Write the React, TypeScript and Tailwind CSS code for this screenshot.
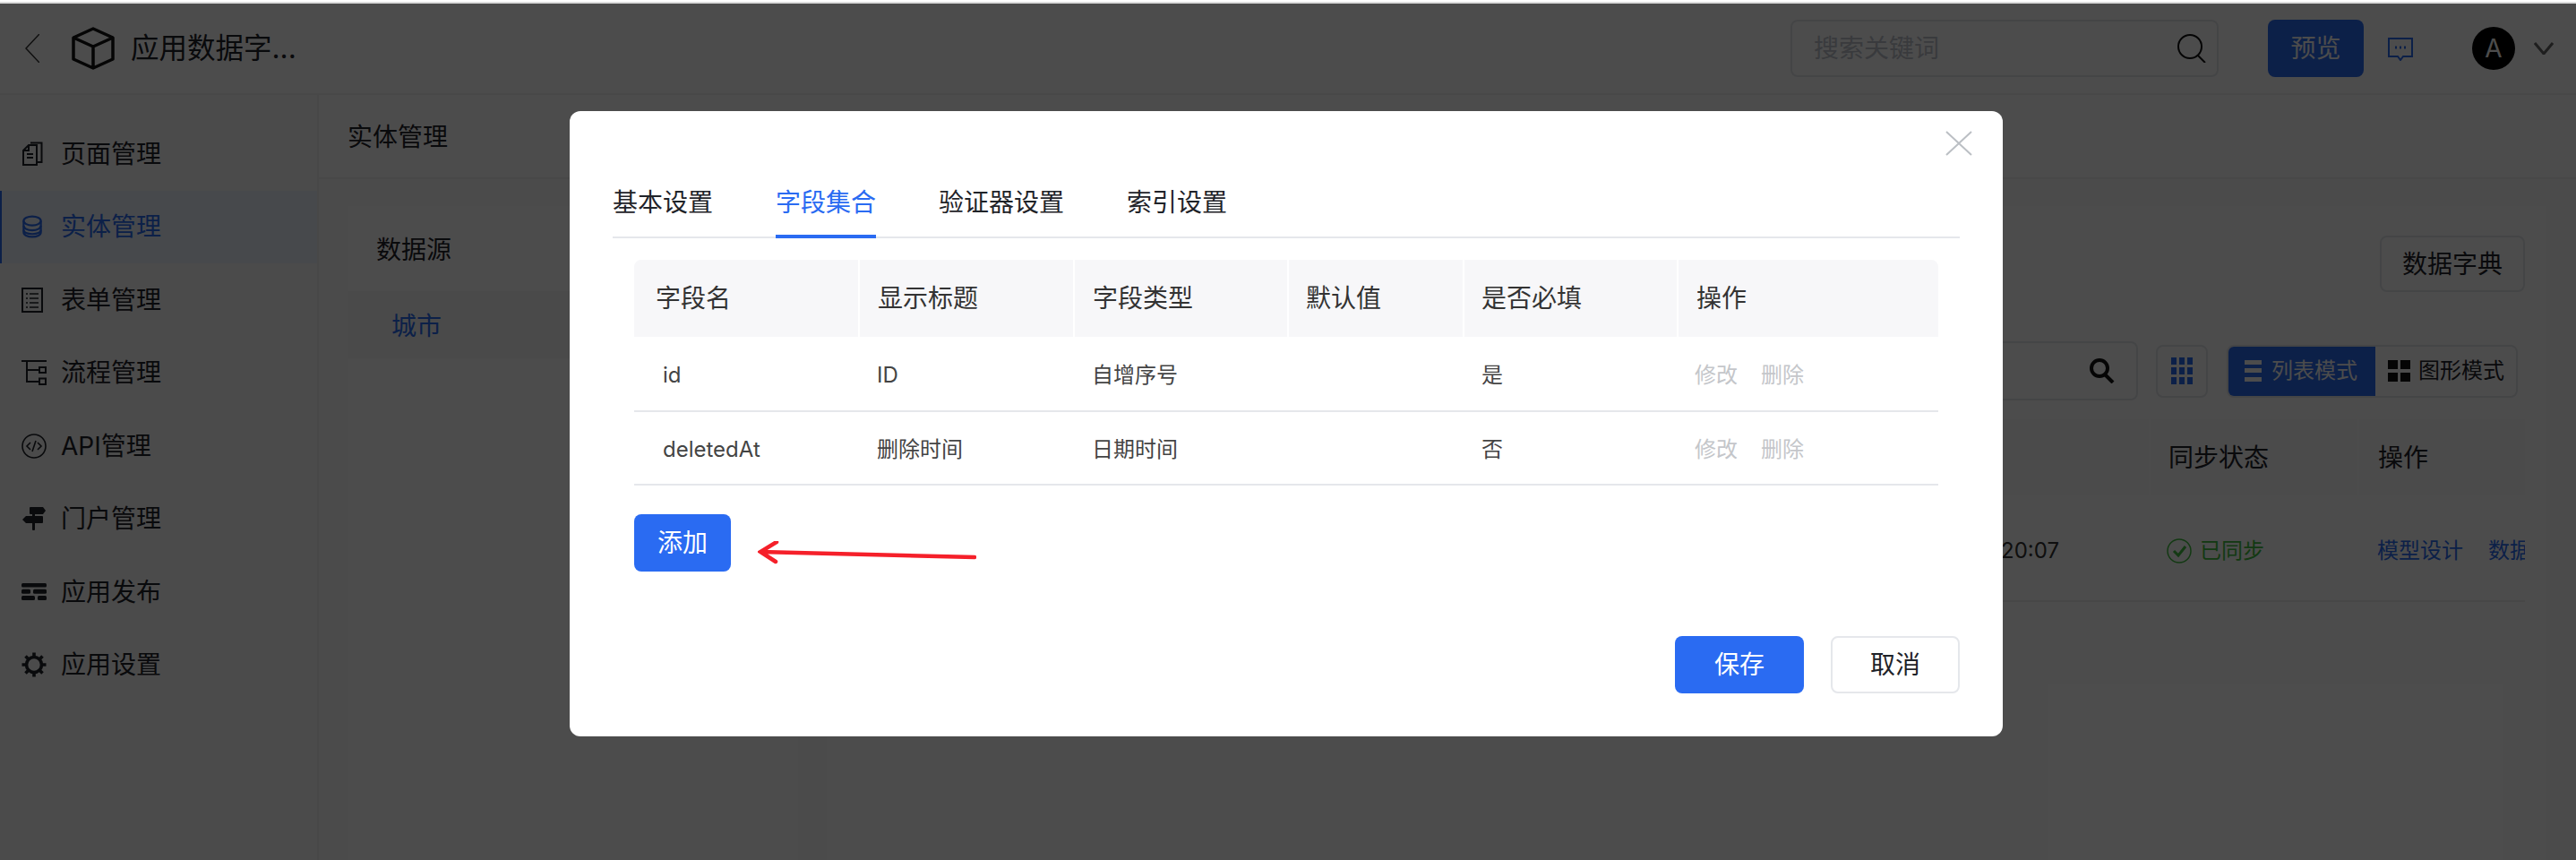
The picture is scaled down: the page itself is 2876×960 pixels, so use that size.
import type { ReactNode } from 'react';

const navItems: { label: string; icon: ReactNode; active?: boolean }[] = [
  {
    label: '页面管理',
    icon: (
      <svg viewBox="0 0 24 28" className="w-6 h-7" fill="none" stroke="currentColor" strokeWidth="2">
        <path d="M2 10 L8 4 H17 V26 H2 Z M8 4 V10 H2" />
        <path d="M10 1.500 H22.500 V23 H17" />
        <path d="M6 14 H13 M6 18 H13" />
      </svg>
    ),
  },
  {
    label: '实体管理',
    active: true,
    icon: (
      <svg viewBox="0 0 24 28" className="ml-[1px] w-[22px] h-[26px]" fill="none" stroke="currentColor" strokeWidth="2.400">
        <ellipse cx="12" cy="7" rx="10.500" ry="5.500" />
        <path d="M1.500 7 V21 C1.500 24 6 26.500 12 26.500 C18 26.500 22.500 24 22.500 21 V7" />
        <path d="M1.500 13 C1.500 16 6 18.500 12 18.500 C18 18.500 22.500 16 22.500 13" />
        <path d="M1.500 18 C1.500 21 6 23 12 23 C18 23 22.500 21 22.500 18" />
      </svg>
    ),
  },
  {
    label: '表单管理',
    icon: (
      <svg viewBox="0 0 24 28" className="w-6 h-7" fill="none" stroke="currentColor" strokeWidth="2">
        <rect x="1" y="1" width="22" height="26" />
        <path d="M5 7 H7 M9 7 H19 M5 12 H7 M9 12 H19 M5 17 H7 M9 17 H19 M5 22 H7 M9 22 H19" strokeWidth="1.600" />
      </svg>
    ),
  },
  {
    label: '流程管理',
    icon: (
      <svg viewBox="0 0 28 28" className="w-7 h-7" fill="none" stroke="currentColor" strokeWidth="2">
        <path d="M0 1 H28 M6 1 V24 H20 M6 11 H20" />
        <rect x="20" y="8" width="7" height="6" />
        <rect x="20" y="20.500" width="7" height="6.500" />
      </svg>
    ),
  },
  {
    label: 'API管理',
    icon: (
      <svg viewBox="0 0 28 28" className="w-7 h-7" fill="none" stroke="currentColor" strokeWidth="1.600">
        <circle cx="14" cy="14" r="13" />
        <path d="M10 10 L6 14 L10 18 M18 10 L22 14 L18 18 M16 8 L12 20" />
      </svg>
    ),
  },
  {
    label: '门户管理',
    icon: (
      <svg viewBox="0 0 26 26" className="ml-[1px] w-[26px] h-[26px]" fill="currentColor">
        <path d="M9 0 H23 L26 4 L23 8 H9 A1 1 0 0 1 8 7 V1 A1 1 0 0 1 9 0 Z" />
        <path d="M4 10 H22 A1 1 0 0 1 23 11 V17 A1 1 0 0 1 22 18 H4 L0 14 Z" />
        <rect x="11" y="7" width="3" height="19" rx="1" />
      </svg>
    ),
  },
  {
    label: '应用发布',
    icon: (
      <svg viewBox="0 0 28 19" className="w-7 h-[19px]" fill="currentColor">
        <rect x="0" y="0" width="28" height="4.500" rx="1.500" />
        <rect x="0" y="6.800" width="10" height="5" rx="1.500" />
        <rect x="13" y="6.800" width="15" height="5" rx="1.500" />
        <rect x="0" y="14" width="15" height="5" rx="1.500" />
        <rect x="18" y="14" width="10" height="5" rx="1.500" />
      </svg>
    ),
  },
  {
    label: '应用设置',
    icon: (
      <svg viewBox="0 0 28 28" className="w-7 h-7" fill="none" stroke="currentColor">
        <circle cx="14" cy="14" r="8.500" strokeWidth="3.600" />
        <path d="M14 0.500 V5 M14 23 V27.500 M0.500 14 H5 M23 14 H27.500 M4.500 4.500 L7.500 7.500 M20.500 20.500 L23.500 23.500 M4.500 23.500 L7.500 20.500 M20.500 7.500 L23.500 4.500" strokeWidth="3.600" />
      </svg>
    ),
  },
];

const fields = [
  { name: 'id', title: 'ID', type: '自增序号', required: '是', height: 'h-[84px]' },
  { name: 'deletedAt', title: '删除时间', type: '日期时间', required: '否', height: 'h-[82px]' },
];

export default function App() {
  return (
    <div className="relative h-[960px] w-[2876px] overflow-hidden bg-white text-[#1f2329] font-['Inter','Noto_Sans_CJK_SC',sans-serif]">
      <div className="h-[2px] bg-white" />
      <div className="h-[2px] bg-[#dcdcdc]" />

      {/* Barra superior */}
      <header className="flex h-[100px] items-center bg-white">
        <svg viewBox="0 0 16 32" className="ml-[28px] h-[32px] w-[16px]" fill="none" stroke="#333" strokeWidth="1.500">
          <path d="M16 0 L1 16 L16 32" />
        </svg>
        <svg viewBox="0 0 48 48" className="ml-[36px] h-[48px] w-[48px]" fill="none" stroke="#111" strokeWidth="3.500" strokeLinejoin="round">
          <path d="M24 2 L46 12 V36 L24 46 L2 36 V12 Z M2 12 L24 22 L46 12 M24 22 V46" />
        </svg>
        <span className="ml-[18px] text-[31.500px] leading-[44px]">应用数据字...</span>

        <div className="ml-auto flex h-[64px] w-[478px] items-center rounded-lg border-2 border-[#e5e7eb] pl-[24px] pr-[10px]">
          <span className="text-[28px] text-[#c0c4cc]">搜索关键词</span>
          <svg viewBox="0 0 36 32" className="ml-auto h-[32px] w-[36px]" fill="none" stroke="#111" strokeWidth="2">
            <circle cx="16" cy="14" r="13" />
            <path d="M25 24 L33 32" />
          </svg>
        </div>
        <button className="ml-[55px] h-[64px] w-[107px] rounded-lg bg-[#2a6bf2] text-[28px] text-white">预览</button>
        <svg viewBox="0 0 28 26" className="ml-[27px] mt-[2px] h-[26px] w-[28px]" fill="none" stroke="#2a6bf2" strokeWidth="2">
          <path d="M1 1 H27 V21 H17 L14 25 L11 21 H1 Z" />
          <path d="M8 11 H10 M13 11 H15 M18 11 H20" strokeWidth="3" />
        </svg>
        <div className="ml-[66px] flex h-[48px] w-[48px] items-center justify-center rounded-full bg-black text-[28px] text-white">A</div>
        <svg viewBox="0 0 22 14" className="ml-[21px] mr-[25px] h-[14px] w-[22px]" fill="none" stroke="#666" strokeWidth="3">
          <path d="M1 1 L11 13 L21 1" />
        </svg>
      </header>

      <div className="flex h-[856px] border-t-2 border-[#f0f0f0]">
        {/* Menu lateral */}
        <aside className="flex w-[356px] shrink-0 flex-col border-r-2 border-[#f0f0f0] bg-[#fafafa] pt-[25px]">
          {navItems.map((item) => (
            <div
              key={item.label}
              className={`flex h-[81.500px] items-center text-[28px] ${item.active ? 'border-l-2 border-[#2a6bf2] bg-[#edf4ff] pl-[22px] text-[#2a6bf2]' : 'pl-[24px]'}`}
            >
              <span className="flex w-[44px] justify-start">{item.icon}</span>
              <span>{item.label}</span>
            </div>
          ))}
        </aside>

        <main className="flex flex-1 flex-col bg-[#fafafa]">
          <div className="flex h-[94px] items-center border-b-2 border-[#f0f0f0] bg-white pl-[32px] pt-[2px] text-[28px]">实体管理</div>

          <div className="flex flex-1 gap-[32px] pl-[32px] pr-[33px] pt-[30px]">
            {/* Fuentes de datos */}
            <section className="flex w-[503px] shrink-0 flex-col bg-white">
              <div className="flex h-[95px] items-center pl-[32px] pt-[2px] text-[28px]">数据源</div>
              <div className="flex h-[75px] items-center bg-[#f8f8f8] pl-[49px] pt-[2px] text-[28px] text-[#2a6bf2]">城市</div>
            </section>

            {/* Lista de entidades */}
            <section className="flex flex-1 flex-col items-end bg-white">
              <button className="mr-[24px] mt-[33px] h-[63px] w-[162px] rounded-lg border-2 border-[#e5e7eb] text-[28px]">数据字典</button>

              <div className="mr-[32px] mt-[55px] flex h-[66px] items-center">
                <div className="flex h-[66px] w-[300px] items-center justify-end rounded-lg border-2 border-[#e5e7eb] pr-[24px]">
                  <svg viewBox="0 0 28 28" className="h-[28px] w-[28px]" fill="none" stroke="#111" strokeWidth="4">
                    <circle cx="11" cy="11" r="9" />
                    <path d="M17 18 L26 27" />
                  </svg>
                </div>
                <div className="ml-[20px] flex h-[59px] w-[58px] items-center justify-center rounded-lg border-2 border-[#e5e7eb]">
                  <svg viewBox="0 0 24 30" className="h-[30px] w-[24px]" fill="#2a6bf2">
                    {[0, 9, 18].map((x) =>
                      [0, 11, 22].map((y) => <rect key={`${x}-${y}`} x={x} y={y} width="6" height="8" />),
                    )}
                  </svg>
                </div>
                <div className="ml-[21px] flex h-[59px] w-[325px] overflow-hidden rounded-lg border-2 border-[#e5e7eb] text-[24px]">
                  <div className="flex w-[164px] items-center gap-[11px] bg-[#2a6bf2] pl-[18px] text-white">
                    <svg viewBox="0 0 19 24" className="h-[24px] w-[19px]" fill="white">
                      <rect y="0" width="19" height="5" />
                      <rect y="9" width="19" height="5" />
                      <rect y="19" width="19" height="5" />
                    </svg>
                    列表模式
                  </div>
                  <div className="flex flex-1 items-center gap-[9px] pl-[14px]">
                    <svg viewBox="0 0 25 24" className="h-[24px] w-[25px]" fill="#111">
                      <rect width="11" height="10" />
                      <rect x="14" width="11" height="10" />
                      <rect y="14" width="11" height="10" />
                      <rect x="14" y="14" width="11" height="10" />
                    </svg>
                    图形模式
                  </div>
                </div>
              </div>

              <div className="mr-[24px] mt-[21px] flex h-[85px] w-[800px] bg-[#fafafa] text-[28px]">
                <div className="flex-1" />
                <div className="flex w-[233px] items-center border-l-2 border-white pl-[20px]">同步状态</div>
                <div className="flex w-[187px] items-center border-l-2 border-white pl-[21px]">操作</div>
              </div>
              <div className="mr-[24px] flex h-[119px] w-[800px] items-center overflow-hidden border-b-2 border-[#eeeeee] pt-[6px] text-[24px]">
                <span className="flex-1 pr-[100px] text-right text-[#333]">20:07</span>
                <span className="flex w-[233px] shrink-0 items-center gap-[9px] pl-[20px] text-[#40c040]">
                  <svg viewBox="0 0 28 28" className="h-[28px] w-[28px]" fill="none" stroke="#40c040">
                    <circle cx="14" cy="14" r="13" strokeWidth="1.500" />
                    <path d="M8 14 L13 19 L21 9" strokeWidth="3" />
                  </svg>
                  已同步
                </span>
                <span className="flex w-[187px] shrink-0 gap-[28px] overflow-hidden whitespace-nowrap pl-[22px] text-[#2a6bf2]">
                  <span>模型设计</span>
                  <span>数据管理</span>
                </span>
              </div>
            </section>
          </div>
        </main>
      </div>

      {/* Capa del dialogo */}
      <div className="absolute inset-x-0 bottom-0 top-[4px] flex justify-center bg-black/70 pr-[4px] pt-[120px]">
        <div className="relative flex h-[698px] w-[1600px] flex-col rounded-xl bg-white px-[48px]">
          <svg viewBox="0 0 30 28" className="absolute right-[34px] top-[22px] h-[28px] w-[30px]" fill="none" stroke="#bbbfc4" strokeWidth="2">
            <path d="M1 1 L29 27 M29 1 L1 27" />
          </svg>

          <div className="mt-[74px] flex h-[68px] gap-[70px] border-b-2 border-[#e5e7eb] text-[28px]">
            <span className="leading-[56px]">基本设置</span>
            <span className="-mb-[2px] border-b-4 border-[#2a6bf2] leading-[56px] text-[#2a6bf2]">字段集合</span>
            <span className="leading-[56px]">验证器设置</span>
            <span className="leading-[56px]">索引设置</span>
          </div>

          <div className="mx-[24px] mt-[24px]">
            <div className="flex h-[86px] items-center overflow-hidden rounded-t-lg bg-[#f7f7f9] text-[28px] text-[#333]">
              <div className="flex h-full w-[250px] items-center pl-[24px]">字段名</div>
              <div className="flex h-full w-[240px] items-center border-l-2 border-white pl-[20px]">显示标题</div>
              <div className="flex h-full w-[239px] items-center border-l-2 border-white pl-[20px]">字段类型</div>
              <div className="flex h-full w-[196px] items-center border-l-2 border-white pl-[19px]">默认值</div>
              <div className="flex h-full w-[239px] items-center border-l-2 border-white pl-[19px]">是否必填</div>
              <div className="flex h-full flex-1 items-center border-l-2 border-white pl-[20px]">操作</div>
            </div>
            {fields.map((f) => (
              <div key={f.name} className={`flex items-center border-b-2 border-[#e5e7eb] pt-[4px] text-[24px] text-[#444] ${f.height}`}>
                <div className="w-[250px] pl-[32px]">{f.name}</div>
                <div className="w-[240px] pl-[21px]">{f.title}</div>
                <div className="w-[239px] pl-[21px]">{f.type}</div>
                <div className="w-[196px]" />
                <div className="w-[239px] pl-[21px]">{f.required}</div>
                <div className="flex flex-1 gap-[26px] pl-[20px] text-[#c4c6ca]">
                  <span>修改</span>
                  <span>删除</span>
                </div>
              </div>
            ))}
          </div>

          <div className="relative ml-[24px] mt-[32px]">
            <button className="h-[64px] w-[108px] rounded-lg bg-[#2a6bf2] text-[28px] text-white">添加</button>
            <svg viewBox="0 0 244 26" className="absolute left-[138px] top-[30px] h-[26px] w-[244px]" fill="none" stroke="#f5202a" strokeWidth="4.500" strokeLinecap="round">
              <path d="M242 18 L3 12 M21 1 L3 12 L20 23" />
            </svg>
          </div>

          <div className="mt-auto mb-[48px] flex justify-end gap-[30px] text-[28px]">
            <button className="h-[64px] w-[144px] rounded-lg bg-[#2a6bf2] text-white">保存</button>
            <button className="h-[64px] w-[144px] rounded-lg border-2 border-[#e5e7eb]">取消</button>
          </div>
        </div>
      </div>
    </div>
  );
}
